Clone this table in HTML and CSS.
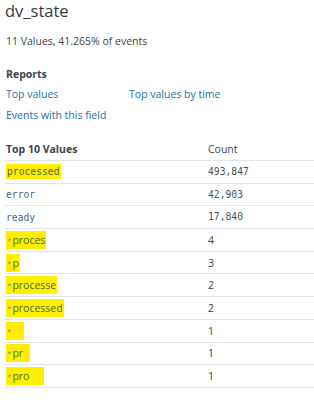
FILE: index.html
```html
<!DOCTYPE html>
<html>
<head>
<meta charset="utf-8">
<link rel="stylesheet" href="styles.css">
</head>
<body>
<div class="panel">
  <h1 class="title">dv_state</h1>
  <p class="summary">11 Values, 41.265% of events</p>
  <h2 class="section">Reports</h2>
  <div class="links">
    <a class="link">Top values</a>
    <a class="link">Top values by time</a>
    <a class="link">Events with this field</a>
  </div>
  <table class="values">
    <thead>
      <tr><th class="c1">Top 10 Values</th><th class="c2">Count</th></tr>
    </thead>
    <tbody>
      <tr><td><span class="mono hl hl-a">processed</span></td><td class="mono">493,847</td></tr>
      <tr><td><span class="mono">error</span></td><td class="mono">42,903</td></tr>
      <tr><td><span class="mono">ready</span></td><td class="mono">17,840</td></tr>
      <tr><td><span class="hl"><span class="star">*</span>proces</span></td><td>4</td></tr>
      <tr><td><span class="hl"><span class="star">*</span>p</span></td><td>3</td></tr>
      <tr><td><span class="hl"><span class="star">*</span>processe</span></td><td>2</td></tr>
      <tr><td><span class="hl"><span class="star">*</span>processed</span></td><td>2</td></tr>
      <tr><td><span class="hl"><span class="star">*</span>&nbsp;&nbsp;&nbsp;&nbsp;</span></td><td>1</td></tr>
      <tr><td><span class="hl"><span class="star">*</span>pr&nbsp;&nbsp;</span></td><td>1</td></tr>
      <tr><td><span class="hl"><span class="star">*</span>pro&nbsp;&nbsp;&nbsp;&nbsp;&nbsp;</span></td><td>1</td></tr>
    </tbody>
  </table>
</div>
</body>
</html>
```

FILE: styles.css
```css
html, body {
  margin: 0;
  padding: 0;
  background: #ffffff;
}
body {
  font-family: "Open Sans", "Liberation Sans", sans-serif;
  color: #3c444d;
  width: 314px;
  height: 400px;
  overflow: hidden;
}
.panel {
  padding: 0 0 0 5px;
}
.title {
  margin: 0;
  padding-top: 1px;
  font-size: 16.5px;
  font-weight: 500;
  line-height: 20px;
  color: #333a42;
}
.summary {
  margin: 13px 0 0 1px;
  font-size: 10.5px;
  line-height: 14px;
  color: #3c444d;
}
.section {
  margin: 19px 0 0 1px;
  font-size: 10.5px;
  font-weight: 700;
  line-height: 14px;
  color: #3c444d;
}
.links {
  display: grid;
  grid-template-columns: 123px auto;
  row-gap: 7px;
  margin: 6px 0 0 1px;
}
.link {
  font-size: 10.5px;
  line-height: 14px;
  color: #1e6fa8;
}
.values {
  margin-top: 20px;
  width: 309px;
  border-collapse: collapse;
  font-size: 10.5px;
}
.values th {
  text-align: left;
  height: 18px;
  padding: 0 0 0 1px;
  line-height: 14px;
  vertical-align: top;
  border-bottom: 1px solid #e1e6eb;
}
.values th.c1 { font-weight: 700; width: 201px; }
.values th.c2 { font-weight: 400; }
.values td {
  height: 21.7px;
  padding: 0 0 0 1px;
  line-height: 14px;
  border-bottom: 1px solid #e1e6eb;
  vertical-align: middle;
  color: #3c444d;
}
.values td:first-child { color: #3d6c93; }
.mono {
  font-family: "DejaVu Sans Mono", "Liberation Mono", monospace;
  font-size: 9.7px;
}
.values td.mono { color: #4a5058; }
.hl {
  background: #ffee00;
  padding: 2px 1px;
}
.values td:first-child .hl { color: #4a6e3a; }
.values td:first-child .hl.mono { color: #4f6a10; }
.star {
  font-size: 8px;
  vertical-align: top;
  color: #888;
  margin-right: 1px;
}
```
